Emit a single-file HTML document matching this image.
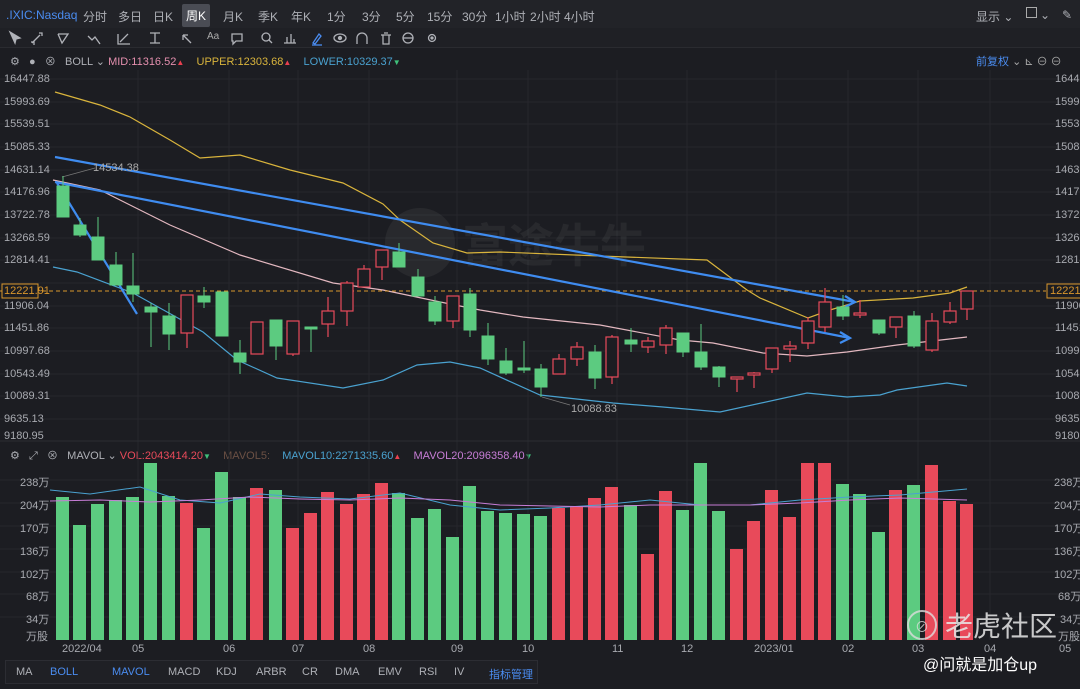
<!DOCTYPE html>
<html><head><meta charset="utf-8"><style>
*{margin:0;padding:0;box-sizing:border-box}
body{width:1080px;height:689px;background:#1c1d22;font-family:"Liberation Sans","Noto Sans CJK SC",sans-serif;color:#aeb0b6;overflow:hidden;position:relative}
.top{position:absolute;left:0;top:0;width:1080px;height:28px;background:#222328;font-size:12px}
.top span{position:absolute;top:8px}
.tb{position:absolute;left:0;top:28px;width:1080px;height:20px;background:#1f2025;border-bottom:1px solid #2a2b30}
.hdr{position:absolute;font-size:11px;white-space:nowrap}
.ax{position:absolute;font-size:11px;color:#a8aab0;white-space:nowrap}
.tabs{position:absolute;left:5px;top:660px;width:533px;height:24px;border:1px solid #2c2d33;background:#1f2025;font-size:11px}
.tabs span{position:absolute;top:5px}
</style></head><body>
<div class="top">
<span style="left:6px;color:#4a8cf0">.IXIC:Nasdaq</span>
<span style="left:83px">分时</span><span style="left:118px">多日</span><span style="left:153px">日K</span>
<span style="left:182px;top:4px;background:#4a4c54;color:#fff;padding:3px 4px;border-radius:2px">周K</span>
<span style="left:223px">月K</span><span style="left:258px">季K</span><span style="left:291px">年K</span>
<span style="left:327px">1分</span><span style="left:362px">3分</span><span style="left:396px">5分</span><span style="left:427px">15分</span><span style="left:462px">30分</span><span style="left:495px">1小时</span><span style="left:530px">2小时</span><span style="left:564px">4小时</span>
<span style="left:976px">显示 ⌄</span><span style="left:1026px;top:7px;width:11px;height:11px;border:1px solid #aaa"></span><span style="left:1040px">⌄</span><span style="left:1062px">✎</span>
</div>
<div class="tb">
<svg width="1080" height="20" style="position:absolute;left:0;top:0" fill="none" stroke="#b0b2b8" stroke-width="1.3">
<path d="M10 4l5 11 1-4 4-1z" fill="#b0b2b8"/>
<path d="M32 15l8-8M31 14h3v3M39 5h3v3"/><path d="M58 6l4 9 6-9h-10"/><path d="M88 8l4 4 3-3 5 7"/><path d="M118 6v10h12M120 14l8-8"/><path d="M150 5h10M155 5v10M150 15h10"/><path d="M183 7l8 8M183 7h5M183 7v5"/>
<path d="M232 6h10v7h-6l-3 3v-3h-1z"/><circle cx="266" cy="9" r="4"/><path d="M269 12l3 3"/><path d="M284 15h12M287 15v-6M291 15v-9M294 15v-4"/>
<path d="M313 15l6-9 2 2-6 8z" stroke="#4a8cf0"/><path d="M312 17h10" stroke="#4a8cf0"/>
<ellipse cx="340" cy="10" rx="6" ry="4"/><circle cx="340" cy="10" r="1.5" fill="#b0b2b8"/>
<path d="M357 16v-6a5 5 0 0 1 10 0v6"/><path d="M381 7h10M383 7v9h6v-9M384 5h4"/><circle cx="408" cy="10" r="5"/><path d="M403 10h10"/><circle cx="432" cy="10" r="3.5"/><circle cx="432" cy="10" r="1" fill="#b0b2b8"/>
</svg>
<span class="hdr" style="left:207px;top:3px;font-size:10px;color:#aaa">Aa</span>
</div>
<div class="hdr" style="left:10px;top:53px">⚙ &nbsp; ● &nbsp; ⊗ &nbsp; BOLL ⌄ <span style="color:#e48fae">MID:11316.52</span><span style="color:#e84050;font-size:8px">▲</span> &nbsp; &nbsp;<span style="color:#d9b43c">UPPER:12303.68</span><span style="color:#e84050;font-size:8px">▲</span> &nbsp; &nbsp;<span style="color:#4aa2d0">LOWER:10329.37</span><span style="color:#3fc07a;font-size:8px">▼</span></div>
<div class="hdr" style="left:976px;top:53px;color:#4a8cf0">前复权 <span style="color:#aaa">⌄ ⊾ ⊖ ⊖</span></div>
<div class="hdr" style="left:10px;top:447px">⚙ &nbsp; ⤢ &nbsp; ⊗ &nbsp; MAVOL ⌄ <span style="color:#e84a5a">VOL:2043414.20</span><span style="color:#3fc07a;font-size:8px">▼</span> &nbsp; &nbsp;<span style="color:#6b5044">MAVOL5:</span> &nbsp; &nbsp;<span style="color:#4aa2d0">MAVOL10:2271335.60</span><span style="color:#e84050;font-size:8px">▲</span> &nbsp; &nbsp;<span style="color:#c77dd6">MAVOL20:2096358.40</span><span style="color:#3fc07a;font-size:8px">▼</span></div>

<svg width="1080" height="689" style="position:absolute;left:0;top:0">
<g stroke="#26272c" stroke-width="1">
<path d="M0 79H1080M0 102H1080M0 124H1080M0 147H1080M0 170H1080M0 192H1080M0 215H1080M0 238H1080M0 260H1080M0 283H1080M0 306H1080M0 328H1080M0 351H1080M0 374H1080M0 396H1080M0 419H1080"/>
<path d="M138 70V640M229 70V640M298 70V640M369 70V640M457 70V640M528 70V640M617 70V640M687 70V640M776 70V640M848 70V640M918 70V640M990 70V640"/>
<path d="M0 480H1080M0 503H1080M0 526H1080M0 549H1080M0 572H1080M0 594H1080M0 617H1080"/>
</g>
<line x1="0" y1="441" x2="1080" y2="441" stroke="#2c2d33"/>
<g opacity="0.06" fill="#ddd"><circle cx="420" cy="243" r="35"/><text x="462" y="262" font-size="46" font-family="Noto Sans CJK SC" font-weight="bold">富途牛牛</text></g>
<polyline fill="none" stroke="#d9b43c" stroke-width="1.2" points="55,92 100,105 130,117 170,140 200,158 240,155 290,170 343,183 383,204 400,220 433,243 467,253 500,252 600,256 707,260 747,290 760,298 808,318 830,310 860,301 913,298 950,293 967,287"/>
<polyline fill="none" stroke="#e3b8c0" stroke-width="1.2" points="53,180 100,190 170,225 240,255 333,283 383,290 450,304 480,310 523,317 600,325 680,340 713,343 763,353 807,356 847,352 897,345 967,337"/>
<polyline fill="none" stroke="#4aa2d0" stroke-width="1.2" points="53,267 77,272 133,293 203,332 237,360 277,378 343,388 383,380 417,365 450,362 480,368 540,395 613,403 663,407 720,412 807,393 847,397 880,395 897,390 947,383 967,386"/>
<line x1="0" y1="291" x2="1046" y2="291" stroke="#d9962c" stroke-dasharray="4,3"/>
<g stroke="#3f8cf0" stroke-width="2.2" fill="none"><path d="M55 157L855 302M845 296l10 6-10 5"/><path d="M55 182L850 338M840 332l10 6-10 5"/><path d="M57 183L137 314"/></g>
<path d="M62 177L95 168" stroke="#777" stroke-width="0.8"/><path d="M542 397L570 405" stroke="#777" stroke-width="0.8"/>
<text x="93" y="171" font-size="11" fill="#aaa" font-family="Liberation Sans">14534.38</text>
<text x="571" y="412" font-size="11" fill="#aaa" font-family="Liberation Sans">10088.83</text>
<g stroke="#5ccb80" fill="#5ccb80" stroke-width="1">
<path d="M63 176V217M80 218V237M98 217V260M116 252V285M133 253V302M151 303V347M169 303V350M204 287V308M222 292V336M240 340V374M276 320V360M311 327V352M399 243V267M418 269V296M435 296V325M470 288V337M488 323V365M506 348V375M524 341V373M541 364V397M595 345V389M631 328V352M683 333V357M701 324V370M719 366V387M843 295V320M879 320V335M914 311V348"/>
<rect x="57" y="186" width="12" height="31"/><rect x="74" y="225" width="12" height="10"/><rect x="92" y="237" width="12" height="23"/><rect x="110" y="265" width="12" height="20"/><rect x="127" y="286" width="12" height="8"/><rect x="145" y="307" width="12" height="5"/><rect x="163" y="316" width="12" height="18"/><rect x="198" y="296" width="12" height="6"/><rect x="216" y="292" width="12" height="44"/><rect x="234" y="353" width="12" height="9"/><rect x="270" y="320" width="12" height="26"/><rect x="305" y="327" width="12" height="2"/><rect x="393" y="252" width="12" height="15"/><rect x="412" y="277" width="12" height="19"/><rect x="429" y="302" width="12" height="19"/><rect x="464" y="294" width="12" height="36"/><rect x="482" y="336" width="12" height="23"/><rect x="500" y="361" width="12" height="12"/><rect x="518" y="368" width="12" height="2"/><rect x="535" y="369" width="12" height="18"/><rect x="589" y="352" width="12" height="26"/><rect x="625" y="340" width="12" height="4"/><rect x="677" y="333" width="12" height="19"/><rect x="695" y="352" width="12" height="15"/><rect x="713" y="367" width="12" height="10"/><rect x="837" y="307" width="12" height="9"/><rect x="873" y="320" width="12" height="13"/><rect x="908" y="316" width="12" height="30"/>
</g>
<g stroke="#e84a5a" fill="#1c1d22" stroke-width="1.2">
<path d="M187 295V348M257 322V354M293 321V356M328 297V337M347 281V326M364 265V287M382 250V280M453 296V328M559 354V374M577 342V366M612 335V384M648 337V353M666 325V354M737 377V392M754 372V388M772 348V373M790 341V362M808 317V349M825 288V332M860 300V318M896 317V338M932 313V352M950 302V324M967 291V320"/>
<rect x="181" y="295" width="12" height="38"/><rect x="251" y="322" width="12" height="32"/><rect x="287" y="321" width="12" height="33"/><rect x="322" y="311" width="12" height="13"/><rect x="341" y="283" width="12" height="28"/><rect x="358" y="269" width="12" height="18"/><rect x="376" y="250" width="12" height="17"/><rect x="447" y="296" width="12" height="25"/><rect x="553" y="359" width="12" height="15"/><rect x="571" y="347" width="12" height="12"/><rect x="606" y="337" width="12" height="40"/><rect x="642" y="341" width="12" height="6"/><rect x="660" y="328" width="12" height="17"/><rect x="731" y="377" width="12" height="2"/><rect x="748" y="373" width="12" height="2"/><rect x="766" y="348" width="12" height="21"/><rect x="784" y="346" width="12" height="3"/><rect x="802" y="321" width="12" height="22"/><rect x="819" y="302" width="12" height="25"/><rect x="854" y="313" width="12" height="2"/><rect x="890" y="317" width="12" height="10"/><rect x="926" y="321" width="12" height="29"/><rect x="944" y="311" width="12" height="11"/><rect x="961" y="291" width="12" height="18"/>
</g>
<g fill="#5ccb80">
<rect x="56" y="497" width="13" height="143"/><rect x="73" y="525" width="13" height="115"/><rect x="91" y="504" width="13" height="136"/><rect x="109" y="500" width="13" height="140"/><rect x="126" y="497" width="13" height="143"/><rect x="144" y="463" width="13" height="177"/><rect x="162" y="496" width="13" height="144"/><rect x="197" y="528" width="13" height="112"/><rect x="215" y="472" width="13" height="168"/><rect x="233" y="497" width="13" height="143"/><rect x="269" y="490" width="13" height="150"/><rect x="392" y="493" width="13" height="147"/><rect x="411" y="518" width="13" height="122"/><rect x="428" y="509" width="13" height="131"/><rect x="446" y="537" width="13" height="103"/><rect x="463" y="486" width="13" height="154"/><rect x="481" y="511" width="13" height="129"/><rect x="499" y="513" width="13" height="127"/><rect x="517" y="514" width="13" height="126"/><rect x="534" y="516" width="13" height="124"/><rect x="624" y="505" width="13" height="135"/><rect x="676" y="510" width="13" height="130"/><rect x="694" y="463" width="13" height="177"/><rect x="712" y="511" width="13" height="129"/><rect x="836" y="484" width="13" height="156"/><rect x="853" y="494" width="13" height="146"/><rect x="872" y="532" width="13" height="108"/><rect x="907" y="485" width="13" height="155"/>
</g>
<g fill="#e84a5a">
<rect x="180" y="503" width="13" height="137"/><rect x="250" y="488" width="13" height="152"/><rect x="286" y="528" width="13" height="112"/><rect x="304" y="513" width="13" height="127"/><rect x="321" y="492" width="13" height="148"/><rect x="340" y="504" width="13" height="136"/><rect x="357" y="494" width="13" height="146"/><rect x="375" y="483" width="13" height="157"/><rect x="552" y="508" width="13" height="132"/><rect x="570" y="507" width="13" height="133"/><rect x="588" y="498" width="13" height="142"/><rect x="605" y="487" width="13" height="153"/><rect x="641" y="554" width="13" height="86"/><rect x="659" y="491" width="13" height="149"/><rect x="730" y="549" width="13" height="91"/><rect x="747" y="521" width="13" height="119"/><rect x="765" y="490" width="13" height="150"/><rect x="783" y="517" width="13" height="123"/><rect x="801" y="463" width="13" height="177"/><rect x="818" y="463" width="13" height="177"/><rect x="889" y="490" width="13" height="150"/><rect x="925" y="465" width="13" height="175"/><rect x="943" y="501" width="13" height="139"/><rect x="960" y="504" width="13" height="136"/>
</g>
<polyline fill="none" stroke="#4aa2d0" stroke-width="1" points="50,490 90,494 140,487 180,500 220,503 260,494 300,497 350,499 400,493 450,505 500,510 550,508 600,505 650,500 700,505 750,505 800,500 850,497 900,495 967,489"/>
<polyline fill="none" stroke="#c77dd6" stroke-width="1" points="50,501 100,500 150,502 200,500 250,497 300,499 350,500 400,498 450,500 500,505 550,506 600,507 650,505 700,505 750,505 800,503 850,500 900,498 967,500"/>
<rect x="2" y="284" width="36" height="14" fill="#1c1d22" stroke="#d9962c"/><rect x="1047" y="284" width="40" height="14" fill="#1c1d22" stroke="#d9962c"/>
<g opacity="0.8"><circle cx="922" cy="625" r="14" fill="none" stroke="#ddd" stroke-width="2"/><text x="915" y="632" font-size="14" fill="#ddd">⊘</text></g>
<text x="945" y="636" font-size="28" fill="#e8e8e8" opacity="0.85" font-family="Noto Sans CJK SC">老虎社区</text>
<text x="923" y="670" font-size="16" fill="#ffffff" font-family="Liberation Sans, Noto Sans CJK SC">@问就是加仓up</text>
</svg>

<div class="ax" style="left:4px;top:73px">16447.88</div><div class="ax" style="left:4px;top:96px">15993.69</div><div class="ax" style="left:4px;top:118px">15539.51</div><div class="ax" style="left:4px;top:141px">15085.33</div><div class="ax" style="left:4px;top:164px">14631.14</div><div class="ax" style="left:4px;top:186px">14176.96</div><div class="ax" style="left:4px;top:209px">13722.78</div><div class="ax" style="left:4px;top:232px">13268.59</div><div class="ax" style="left:4px;top:254px">12814.41</div><div class="ax" style="left:4px;top:285px;color:#d9962c">12221.91</div><div class="ax" style="left:4px;top:300px">11906.04</div><div class="ax" style="left:4px;top:322px">11451.86</div><div class="ax" style="left:4px;top:345px">10997.68</div><div class="ax" style="left:4px;top:368px">10543.49</div><div class="ax" style="left:4px;top:390px">10089.31</div><div class="ax" style="left:4px;top:413px">9635.13</div><div class="ax" style="left:4px;top:430px">9180.95</div>
<div class="ax" style="left:1055px;top:73px">16447.88</div><div class="ax" style="left:1055px;top:96px">15993.6</div><div class="ax" style="left:1055px;top:118px">15539.5</div><div class="ax" style="left:1055px;top:141px">15085.3</div><div class="ax" style="left:1055px;top:164px">14631.1</div><div class="ax" style="left:1055px;top:186px">14176.9</div><div class="ax" style="left:1055px;top:209px">13722.7</div><div class="ax" style="left:1055px;top:232px">13268.5</div><div class="ax" style="left:1055px;top:254px">12814.4</div><div class="ax" style="left:1050px;top:285px;color:#d9962c">12221</div><div class="ax" style="left:1055px;top:300px">11906.0</div><div class="ax" style="left:1055px;top:322px">11451.8</div><div class="ax" style="left:1055px;top:345px">10997.6</div><div class="ax" style="left:1055px;top:368px">10543.4</div><div class="ax" style="left:1055px;top:390px">10089.3</div><div class="ax" style="left:1055px;top:413px">9635.13</div><div class="ax" style="left:1055px;top:430px">9180.95</div>
<div class="ax" style="left:20px;top:474px">238万</div><div class="ax" style="left:20px;top:497px">204万</div><div class="ax" style="left:20px;top:520px">170万</div><div class="ax" style="left:20px;top:543px">136万</div><div class="ax" style="left:20px;top:566px">102万</div><div class="ax" style="left:26px;top:588px">68万</div><div class="ax" style="left:26px;top:611px">34万</div><div class="ax" style="left:26px;top:628px">万股</div>
<div class="ax" style="left:1054px;top:474px">238万</div><div class="ax" style="left:1054px;top:497px">204万</div><div class="ax" style="left:1054px;top:520px">170万</div><div class="ax" style="left:1054px;top:543px">136万</div><div class="ax" style="left:1054px;top:566px">102万</div><div class="ax" style="left:1058px;top:588px">68万</div><div class="ax" style="left:1060px;top:611px">34万</div><div class="ax" style="left:1058px;top:628px">万股</div>
<div class="ax" style="left:62px;top:643px">2022/04</div><div class="ax" style="left:132px;top:643px">05</div><div class="ax" style="left:223px;top:643px">06</div><div class="ax" style="left:292px;top:643px">07</div><div class="ax" style="left:363px;top:643px">08</div><div class="ax" style="left:451px;top:643px">09</div><div class="ax" style="left:522px;top:643px">10</div><div class="ax" style="left:612px;top:643px">11</div><div class="ax" style="left:681px;top:643px">12</div><div class="ax" style="left:754px;top:643px">2023/01</div><div class="ax" style="left:842px;top:643px">02</div><div class="ax" style="left:912px;top:643px">03</div><div class="ax" style="left:984px;top:643px">04</div><div class="ax" style="left:1059px;top:643px">05</div>
<div class="tabs"><span style="left:10px">MA</span><span style="left:44px;color:#4a8cf0">BOLL</span><span style="left:106px;color:#4a8cf0">MAVOL</span><span style="left:162px">MACD</span><span style="left:210px">KDJ</span><span style="left:250px">ARBR</span><span style="left:296px">CR</span><span style="left:329px">DMA</span><span style="left:372px">EMV</span><span style="left:413px">RSI</span><span style="left:448px">IV</span><span style="left:483px;color:#4a8cf0">指标管理</span></div>
</body></html>
